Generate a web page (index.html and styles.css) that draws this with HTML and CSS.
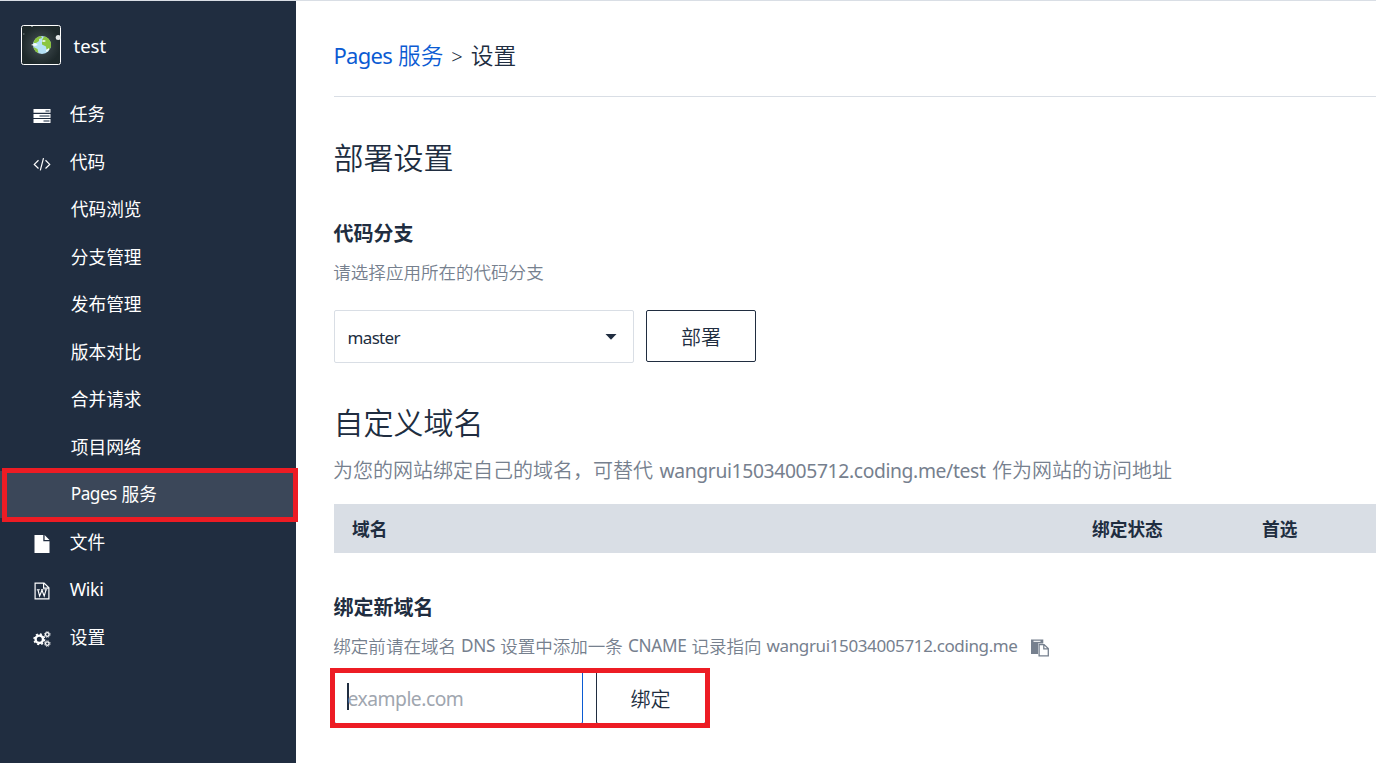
FILE: index.html
```html
<!DOCTYPE html>
<html lang="zh-CN">
<head>
<meta charset="utf-8">
<title>Pages 服务 - 设置</title>
<link rel="stylesheet" href="styles.css">
</head>
<body>
<div class="app">
  <aside class="sidebar">
    <div class="project">
      <svg class="avatar" viewBox="0 0 40 40">
        <defs><radialGradient id="space"><stop offset="0" stop-color="#56625f"/><stop offset=".55" stop-color="#303b3e"/><stop offset="1" stop-color="#1e292b"/></radialGradient></defs>
        <rect x=".5" y=".5" width="39" height="39" rx="2" fill="url(#space)" stroke="#fff"/>
        <circle cx="21" cy="20" r="9" fill="#b5e1f5"/>
        <path d="M12.5 18q1-6 7.500-7l1 2-3 1v2l-3 2zM21 15l2-3.500q5 .5 7 6.500v4l-2.500 3.500-2-1-.5-3-4-2zM12.500 22l4 2 1 4q-4-1-5-6z" fill="#8bc53f"/>
        <path d="M10 20l4-2 3 2-3 1zM20 16l3-1 2 1-2 1zM25 25l3-2v2l-3 2z" fill="#f4fbfa"/>
        <circle cx="37.2" cy="12.5" r="2.5" fill="#e4e8e8"/><path d="M2 9h1.5M10 1.5h2" stroke="#7d8988"/>
      </svg>
      <span class="project-name">test</span>
    </div>
    <nav class="menu">
      <a class="item"><svg class="icon" viewBox="0 0 18 18"><path d="M.5 2h17v3.8H.5zM.5 7h17v3.9H.5zM.5 12.1h17v3.8H.5z" fill="#fff"/><path d="M12.5 4h4M6.5 9h10M10.5 14h6" stroke="#647080" stroke-width="1.5"/></svg><span>任务</span></a>
      <a class="item"><svg class="icon" viewBox="0 0 18 18"><path d="M5.500 5.300L1.300 9.400l4.200 4.100M12.500 5.300l4.200 4.100-4.200 4.100M10.500 3.200L7.300 15.400" fill="none" stroke="#fff" stroke-width="1.2"/></svg><span>代码</span></a>
      <a class="item sub">代码浏览</a>
      <a class="item sub">分支管理</a>
      <a class="item sub">发布管理</a>
      <a class="item sub">版本对比</a>
      <a class="item sub">合并请求</a>
      <a class="item sub">项目网络</a>
      <a class="item sub active"><span class="lat-pages">Pages</span>&nbsp;服务</a>
      <a class="item"><svg class="icon" viewBox="0 0 18 18"><path d="M1.500 0h8.800v6.200h6.200V18h-15zM11.600 0l4.900 4.900h-4.900z" fill="#fff"/></svg><span>文件</span></a>
      <a class="item"><svg class="icon" viewBox="0 0 18 18"><path d="M2.100 1.100h9l4.800 4.700v11.100H2.100zM10.600 1.100v5h5.300" fill="none" stroke="#fff" stroke-width="1.2"/><path d="M3.800 7.800h3M8 7.800h2.400M11.500 7.800h2.700M5 8l1.600 6L9 8.300l2.200 5.700L13 8" fill="none" stroke="#fff" stroke-width="1.1"/></svg><span class="lat-wiki">Wiki</span></a>
      <a class="item"><svg class="icon" viewBox="0 0 18 18" fill="none" stroke="#fff"><circle cx="6.300" cy="9.300" r="3.700" stroke-width="2.4"/><circle cx="6.300" cy="9.300" r="5.300" stroke-width="1.5" stroke-dasharray="2 2.163"/><circle cx="14.300" cy="4.500" r="1.800" stroke-width="1.3"/><circle cx="14.300" cy="4.500" r="2.800" stroke-width="1" stroke-dasharray="1.1 1.1"/><circle cx="14.300" cy="13.600" r="1.800" stroke-width="1.3"/><circle cx="14.300" cy="13.600" r="2.800" stroke-width="1" stroke-dasharray="1.1 1.1"/></svg><span>设置</span></a>
    </nav>
    <div class="mark mark-menu"></div>
  </aside>
  <main class="content">
    <header class="crumbs"><a class="crumb-link"><span class="lat-crumb">Pages</span> 服务</a><span class="sep">&gt;</span><span>设置</span></header>
    <h1 class="title">部署设置</h1>
    <h2 class="subtitle subtitle-branch">代码分支</h2>
    <p class="hint hint-branch">请选择应用所在的代码分支</p>
    <div class="controls">
      <div class="select"><span class="lat-master">master</span><svg class="caret" viewBox="0 0 12 6"><path d="M.5 0h11L6 5.800z" fill="#202d40"/></svg></div>
      <button class="btn">部署</button>
    </div>
    <h1 class="title title-domain">自定义域名</h1>
    <p class="desc"><span>为您的网站绑定自己的域名，可替代</span><span class="lat-url">wangrui15034005712.coding.me/test</span><span>作为网站的访问地址</span></p>
    <div class="thead"><span>域名</span><span>绑定状态</span><span>首选</span></div>
    <h2 class="subtitle subtitle-bind">绑定新域名</h2>
    <p class="hint hint-bind"><span>绑定前请在域名</span><span class="lat-dns">DNS</span><span>设置中添加一条</span><span class="lat-cname">CNAME</span><span>记录指向</span><span class="lat-host">wangrui15034005712.coding.me</span>
      <svg class="copy" viewBox="0 0 18 18"><path d="M0 .5h12.300v4H7V15H0z" fill="#76808e"/><path d="M2.500 2.300h7" stroke="#fff" stroke-width="1.1"/><path d="M8.100 5.600h5l4.200 4v7.300H8.100zM12.800 5.600v4.300h4.500" fill="#fff" stroke="#76808e" stroke-width="1.3"/></svg>
    </p>
    <div class="controls controls-bind">
      <div class="input"><i class="cursor"></i><span class="lat-example">example.com</span></div>
      <button class="btn">绑定</button>
      <div class="mark mark-bind"></div>
    </div>
  </main>
</div>
</body>
</html>
```
FILE: styles.css
```css
* { box-sizing: border-box; }
body { margin: 0; font-family: "Noto Sans", "Noto Sans CJK SC", sans-serif; color: #202d40; background: #fff; overflow: hidden; }
h1, h2, p { margin: 0; }
.app { display: flex; height: 763px; border-top: 1px solid #d9dee5; }
.sidebar { position: relative; flex: none; width: 296px; background: #202d40; color: #fff; }
.project { display: flex; align-items: center; gap: 12.5px; height: 89.5px; padding: 0 21px 1px; }
.avatar { width: 40px; height: 40px; }
.project-name { font-size: 18.5px; }
.menu { display: flex; flex-direction: column; }
.item { display: flex; align-items: center; height: 47.5px; padding-left: 33.3px; font-size: 17.7px; line-height: 26px; white-space: nowrap; }
.icon { width: 18px; height: 18px; margin: 4px 18.4px 0 0; }
.sub { padding-left: 70.8px; }
.lat-pages { font-size: 17.2px; letter-spacing: -.5px; }
.lat-wiki { letter-spacing: -.3px; }
.active { background: #3b4759; }
.mark { position: absolute; border: 5px solid #ed1c24; pointer-events: none; }
.mark-menu { left: 2px; top: 467px; width: 296px; height: 54px; }
.content { flex: 1; min-width: 0; padding-left: 38px; font-weight: 350; }
.crumbs { display: flex; align-items: center; height: 96px; padding-top: 14px; border-bottom: 1px solid #d9dee5; font-size: 22.7px; line-height: 32px; white-space: pre; }
.crumb-link { color: #0b5bd3; margin-left: -.6px; }
.lat-crumb { font-size: 22px; font-weight: 400; letter-spacing: -.7px; }
.sep { font-size: 20px; margin: 2px 8px 0; }
.title { font-size: 30px; line-height: 40px; font-weight: 350; margin: 41px 0 0 -.6px; }
.title-domain { margin-top: 40px; }
.subtitle { font-size: 20px; line-height: 30px; font-weight: 700; margin-left: -.6px; }
.subtitle-branch { margin-top: 41px; }
.subtitle-bind { margin-top: 40px; }
.hint { display: flex; align-items: center; height: 26px; margin-left: -.7px; font-size: 17.55px; line-height: 26px; color: #76808e; white-space: nowrap; }
.hint-branch { margin-top: 10px; }
.hint-bind { margin-top: 10px; }
.copy { width: 18px; height: 18px; margin: 4px 0 0 13px; }
.controls { display: flex; gap: 12px; height: 53px; margin-top: 25px; }
.select { display: flex; align-items: center; justify-content: space-between; width: 300px; height: 53px; padding: 2px 16px 0 12.5px; border: 1px solid #d9dee5; border-radius: 2px; }
.lat-master { font-size: 17px; font-weight: 400; letter-spacing: -.65px; }
.caret { width: 12px; height: 6px; margin-top: -2px; }
.btn { width: 110px; height: 52px; padding: 3px 0 0; border: 1px solid #202d40; border-radius: 2px; background: #fff; color: #202d40; font: 350 20px/30px "Noto Sans", "Noto Sans CJK SC", sans-serif; }
.desc { display: flex; height: 30px; margin: 13px 0 0 -1px; font-size: 20px; line-height: 30px; color: #76808e; white-space: nowrap; }
.thead { display: grid; grid-template-columns: 740px 170px 1fr; align-items: center; height: 49px; margin-top: 18px; padding: 1px 0 0 18px; background: #d9dee5; font-size: 17.7px; line-height: 26px; font-weight: 700; }
.controls-bind { position: relative; gap: 13px; margin-top: 13px; }
.input { display: flex; align-items: center; width: 249px; padding: 2px 0 0 12px; border: 1px solid #0b5bd3; border-radius: 2px; color: #a0a6af; }
.controls-bind .input, .controls-bind .btn { height: 53px; margin-top: -1px; }
.controls-bind .btn { padding: 4px 1px 0 0; }
.cursor { width: 2px; height: 27px; margin: -4px -1.5px 0 0; background: #202d40; }
.mark-bind { left: -4px; top: -4px; width: 380px; height: 60px; }
.lat-url { margin: 0 6.5px; font-size: 19.3px; font-weight: 400; letter-spacing: -.36px; }
.lat-dns, .lat-cname, .lat-host { margin-left: 5px; font-size: 17.2px; font-weight: 400; }
.lat-dns, .lat-cname { margin-right: 5px; letter-spacing: -.3px; }
.lat-host { font-size: 17px; letter-spacing: -.38px; }
.lat-example { font-size: 19.3px; font-weight: 400; letter-spacing: -.5px; }
```
